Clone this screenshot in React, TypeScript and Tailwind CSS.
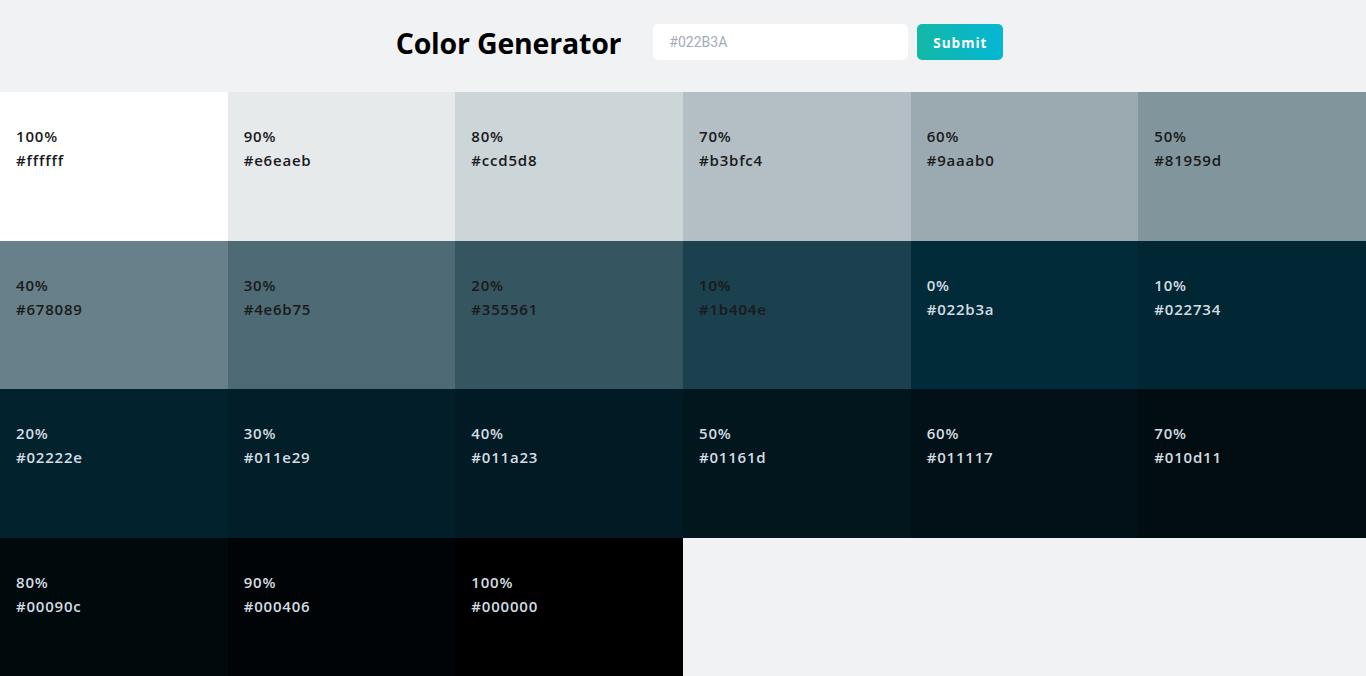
import { useState } from "react";

const colors: { weight: string; hex: string; dark: boolean }[] = [
  { weight: "100%", hex: "#ffffff", dark: false },
  { weight: "90%", hex: "#e6eaeb", dark: false },
  { weight: "80%", hex: "#ccd5d8", dark: false },
  { weight: "70%", hex: "#b3bfc4", dark: false },
  { weight: "60%", hex: "#9aaab0", dark: false },
  { weight: "50%", hex: "#81959d", dark: false },
  { weight: "40%", hex: "#678089", dark: false },
  { weight: "30%", hex: "#4e6b75", dark: false },
  { weight: "20%", hex: "#355561", dark: false },
  { weight: "10%", hex: "#1b404e", dark: false },
  { weight: "0%", hex: "#022b3a", dark: true },
  { weight: "10%", hex: "#022734", dark: true },
  { weight: "20%", hex: "#02222e", dark: true },
  { weight: "30%", hex: "#011e29", dark: true },
  { weight: "40%", hex: "#011a23", dark: true },
  { weight: "50%", hex: "#01161d", dark: true },
  { weight: "60%", hex: "#011117", dark: true },
  { weight: "70%", hex: "#010d11", dark: true },
  { weight: "80%", hex: "#00090c", dark: true },
  { weight: "90%", hex: "#000406", dark: true },
  { weight: "100%", hex: "#000000", dark: true },
];

export default function App() {
  const [value, setValue] = useState("");

  return (
    <div className="min-h-screen bg-[#f1f2f4] font-['Open_Sans','Noto_Sans',sans-serif]">
      <header className="h-[92px] flex items-center justify-center pl-[33px] pb-[9px]">
        <h1 className="text-[28.5px] font-bold text-black tracking-[-0.2px] mr-[32px] mt-[4px]">Color Generator</h1>
        <form
          className="flex items-center gap-[9px]"
          onSubmit={(e) => e.preventDefault()}
        >
          <input
            value={value}
            onChange={(e) => setValue(e.target.value)}
            placeholder="#022B3A"
            className="w-[255px] h-[36px] bg-white rounded-[5px] px-4 text-[14px] placeholder:text-[#a3abb8] outline-none font-['Roboto',sans-serif]"
          />
          <button
            type="submit"
            className="w-[86px] h-[36px] pt-[3px] rounded-[5px] bg-gradient-to-r from-[#14b8a6] to-[#06b6d4] text-white text-[13.5px] font-bold tracking-[1px]"
          >
            Submit
          </button>
        </form>
      </header>

      <section className="grid grid-cols-6 auto-rows-[148.5px]">
        {colors.map((c, i) => (
          <article
            key={i}
            className={`px-4 pt-[32px] text-[15px] font-semibold leading-6 tracking-[0.8px] ${
              c.dark ? "text-[#d5dde3]" : "text-[#1a1a1a]"
            }`}
            style={{ backgroundColor: c.hex }}
          >
            <p>{c.weight}</p>
            <p>{c.hex}</p>
          </article>
        ))}
      </section>
    </div>
  );
}
